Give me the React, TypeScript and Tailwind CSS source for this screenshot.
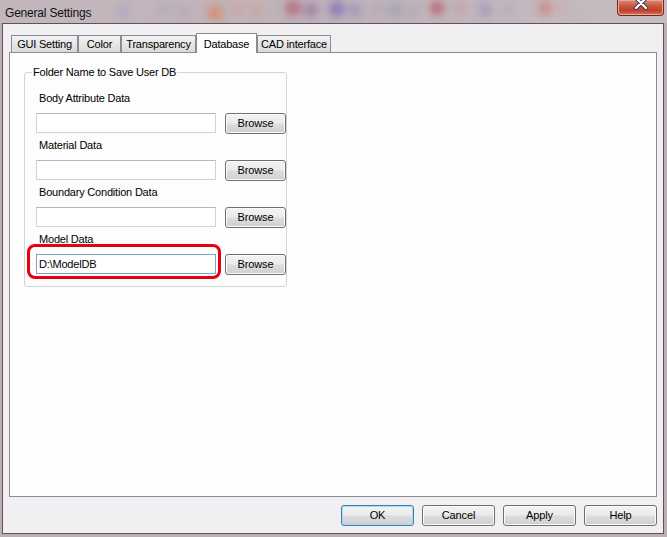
import clsx from 'clsx';

const FONT = "font-['Liberation_Sans',Arial,sans-serif]";

const tabs = [
  { label: 'GUI Setting', w: 'w-[67px]' },
  { label: 'Color', w: 'w-[43px]' },
  { label: 'Transparency', w: 'w-[75px]' },
  { label: 'Database', w: 'w-[61px]', active: true },
  { label: 'CAD interface', w: 'w-[74px]' },
];

const folders = ['Body Attribute Data', 'Material Data', 'Boundary Condition Data', 'Model Data'];

function TitleBlur() {
  const blobs = [
    { x: 123, y: 11, r: 6, c: '#9aa0c8' },
    { x: 164, y: 10, r: 6, c: '#a9a2b2' },
    { x: 183, y: 12, r: 6, c: '#b4a0b0' },
    { x: 215, y: 13, r: 8, c: '#e0784c' },
    { x: 238, y: 9, r: 6, c: '#d89a88' },
    { x: 257, y: 11, r: 6, c: '#d49a86' },
    { x: 293, y: 8, r: 8, c: '#b04565' },
    { x: 311, y: 10, r: 7, c: '#8a5a98' },
    { x: 337, y: 9, r: 8, c: '#6a5ab4' },
    { x: 355, y: 10, r: 7, c: '#8a88b8' },
    { x: 378, y: 9, r: 6, c: '#b4a0b0' },
    { x: 395, y: 10, r: 7, c: '#9098b0' },
    { x: 413, y: 11, r: 6, c: '#a8a0b4' },
    { x: 437, y: 8, r: 7, c: '#b03848' },
    { x: 460, y: 9, r: 6, c: '#c89098' },
    { x: 485, y: 10, r: 7, c: '#8f8fb8' },
    { x: 508, y: 9, r: 6, c: '#a8a8bc' },
    { x: 545, y: 8, r: 7, c: '#d06a5c' },
    { x: 562, y: 8, r: 5, c: '#dca0a0' },
    { x: 572, y: 17, r: 4, c: '#a8c098' },
  ];
  return (
    <svg className="absolute inset-0" width="667" height="23" viewBox="0 0 667 23">
      <defs>
        <filter id="blur" x="-50%" y="-50%" width="200%" height="200%">
          <feGaussianBlur stdDeviation="4" />
        </filter>
      </defs>
      <g filter="url(#blur)" opacity="0.6">
        {blobs.map((b, i) => (
          <circle key={i} cx={b.x} cy={b.y} r={b.r} fill={b.c} />
        ))}
      </g>
    </svg>
  );
}

function CloseButton() {
  return (
    <div className="relative z-10 ml-auto mr-[3px] h-[16px] w-[47px] self-start overflow-hidden rounded-b-[4px] border border-t-0 border-[#6e2a22] bg-[linear-gradient(#d98a78_0%,#c9503a_45%,#c0412c_70%,#d8705a_100%)] shadow-[inset_0_0_0_1px_#e9a898]">
      <svg className="absolute left-[15px] top-[-3px]" width="16" height="14" viewBox="0 0 16 14">
        <path d="M3 1 L13 11 M13 1 L3 11" stroke="#3b3050" strokeWidth="4.2" strokeLinecap="round" />
        <path d="M3 1 L13 11 M13 1 L3 11" stroke="#ffffff" strokeWidth="2.4" strokeLinecap="round" />
      </svg>
    </div>
  );
}

function WinButton({ label, primary, className }: { label: string; primary?: boolean; className?: string }) {
  return (
    <button
      className={clsx(
        'h-[21px] rounded-[3px] border text-[11px] tracking-[-0.1px] text-black leading-none',
        'bg-[linear-gradient(#f3f3f3_0%,#ebebeb_48%,#dddddd_52%,#cfcfcf_100%)]',
        primary
          ? 'border-[#3c7fb1] shadow-[inset_0_0_0_1px_#a6dcf5]'
          : 'border-[#707070] shadow-[inset_0_0_0_1px_#fbfbfb]',
        className,
      )}
    >
      {label}
    </button>
  );
}

export default function App() {
  return (
    <div className={clsx('relative h-[537px] w-[667px] overflow-hidden bg-[#bcaeb4] text-black', FONT)}>
      <div className="relative flex h-[23px] items-start bg-[linear-gradient(90deg,#c3b7bd,#bfb2b9_50%,#c6bcc2)]">
        <TitleBlur />
        <span className="relative pl-[5px] pt-[4px] text-[12px] tracking-[-0.2px] text-[#111]">General Settings</span>
        <CloseButton />
      </div>

      <div className="mx-[2px] flex h-[511px] w-[662px] flex-col border border-[#595559] bg-[#f1eff1]">
        <div className="px-[6px] pt-[9px]">
          <div className="flex h-[19px] items-end pl-[2px]">
            {tabs.map((t) =>
              t.active ? (
                <div
                  key={t.label}
                  className={clsx(
                    'relative z-10 -mb-px flex h-[20px] items-start justify-center border border-b-0 border-[#898c95] bg-[#fcfdfc] pt-[2px] text-[11px] tracking-[-0.2px]',
                    t.w,
                  )}
                >
                  {t.label}
                </div>
              ) : (
                <div
                  key={t.label}
                  className={clsx(
                    'flex h-[17px] items-center justify-center border border-b-0 border-[#898c95] bg-[linear-gradient(#f2f2f2,#e6e6e6_50%,#dadada)] text-[11px] tracking-[-0.2px]',
                    t.w,
                  )}
                >
                  {t.label}
                </div>
              ),
            )}
          </div>

          <div className="h-[445px] border border-[#898c95] bg-[#fcfdfc] pl-[14px] pt-[12px]">
            <fieldset className="w-[263px] rounded-[3px] border border-[#cfd5d9] px-0 pb-[11px] pt-[12px]">
              <legend className="ml-[7px] px-[1px] text-[11px] leading-[14px] tracking-[-0.2px]">
                Folder Name to Save User DB
              </legend>
              <div className="flex flex-col gap-[4px] pl-[11px]">
                {folders.map((f, i) => {
                  const isModel = i === folders.length - 1;
                  return (
                    <div key={f} className="flex flex-col">
                      <span className="ml-[3px] h-[14px] text-[11px] leading-[14px] tracking-[-0.2px]">{f}</span>
                      <div className="mt-[8px] flex items-start gap-[9px]">
                        <div className="relative">
                          <div
                            className={clsx(
                              'flex h-[20px] w-[180px] items-center bg-white pl-[2px] text-[11px] tracking-[-0.2px]',
                              isModel
                                ? 'border border-[#7da2ce]'
                                : 'border border-[#cfd2d8] border-t-[#b4b7bd]',
                            )}
                          >
                            {isModel ? 'D:\\ModelDB' : ''}
                          </div>
                          {isModel && (
                            <div className="absolute -bottom-[5px] -left-[9px] -right-[5px] -top-[10px] rounded-[8px] border-[3px] border-[#e60012]" />
                          )}
                        </div>
                        <WinButton label="Browse" className="w-[61px]" />
                      </div>
                    </div>
                  );
                })}
              </div>
            </fieldset>
          </div>
        </div>

        <div className="mt-[8px] flex justify-end gap-[8px] pr-[6px]">
          <WinButton label="OK" primary className="w-[73px]" />
          <WinButton label="Cancel" className="w-[73px]" />
          <WinButton label="Apply" className="w-[73px]" />
          <WinButton label="Help" className="w-[73px]" />
        </div>
      </div>
    </div>
  );
}
